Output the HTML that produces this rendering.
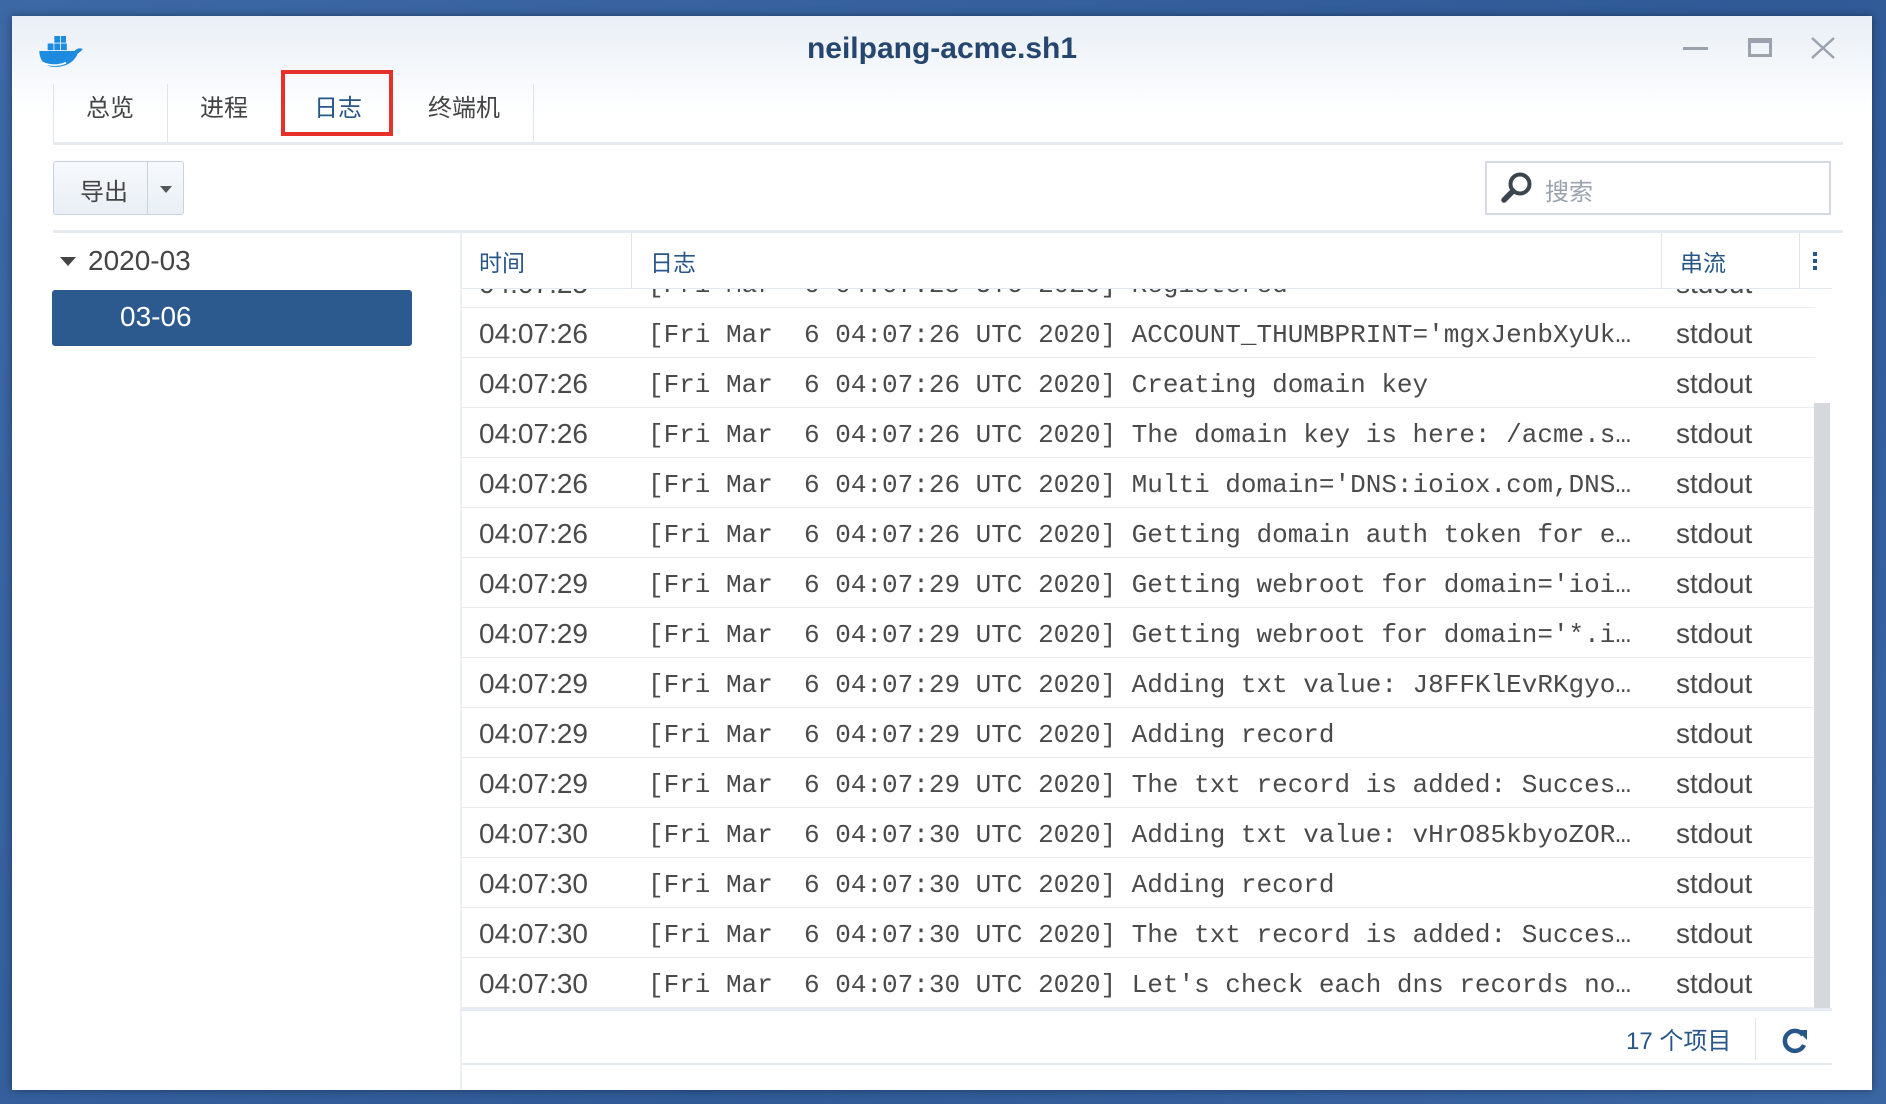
<!DOCTYPE html>
<html><head><meta charset="utf-8"><style>
*{margin:0;padding:0;box-sizing:border-box}
body{width:1886px;height:1104px;overflow:hidden;background:linear-gradient(135deg,#3d68a6,#2f5a96 60%,#3a66a3);font-family:"Liberation Sans","Noto Sans CJK SC",sans-serif;position:relative}
.win{position:absolute;left:12px;top:16px;width:1860px;height:1074px;background:#fff;box-shadow:0 0 8px rgba(0,0,0,.4)}
.tb{position:absolute;left:0;top:0;width:100%;height:100px;background:linear-gradient(#e9eff6,#fff)}
.title{position:absolute;left:0;width:100%;top:16px;text-align:center;font-size:30px;font-weight:bold;color:#24466f}
.abs{position:absolute}
.tab{position:absolute;top:72px;font-size:24px;color:#444}
.sep{position:absolute;width:1px;background:#e0e4ea}
.mono{font-family:"Liberation Mono",monospace;font-size:26px}
.row{position:absolute;left:0;width:1353px;height:50px;border-bottom:1px solid #e9edf1;color:#4a4a4a}
.row span{position:absolute;top:12px}
.t{left:17px;font-size:28px;top:10px!important}
.l{left:186px;white-space:pre}
.s{left:1214px;font-size:28px;top:10px!important}
</style></head><body>
<div class="win">
 <div class="tb"></div>
 <svg class="abs" style="left:24px;top:16px" width="50" height="38" viewBox="0 0 60 44">
  <path d="M4 22 H46 C50 18 54 18 56 20 C54 22 52 24 50 25 C46 36 34 42 20 41 C10 40 4 32 4 22Z" fill="#1d8ce0"/>
  <rect x="14" y="13" width="7" height="8" fill="#1d8ce0"/><rect x="22" y="13" width="7" height="8" fill="#1d8ce0"/><rect x="30" y="13" width="7" height="8" fill="#1d8ce0"/><rect x="22" y="4" width="7" height="8" fill="#1d8ce0"/><rect x="30" y="4" width="6" height="8" fill="#1d8ce0"/>
  <path d="M8 36 C16 40 28 40 36 36" stroke="#fff" stroke-width="2" fill="none"/>
 </svg>
 <div class="title">neilpang-acme.sh1</div>
 <div class="abs" style="left:1671px;top:31px;width:25px;height:3px;background:#9aa3ad"></div>
 <div class="abs" style="left:1736px;top:22px;width:24px;height:19px;border:3px solid #9aa3ad;border-top-width:5px"></div>
 <svg class="abs" style="left:1798px;top:21px" width="26" height="22"><path d="M2 1 L24 21 M24 1 L2 21" stroke="#9aa3ad" stroke-width="2.5"/></svg>

 <div class="sep" style="left:41px;top:68px;height:58px"></div>
 <div class="sep" style="left:155px;top:68px;height:58px"></div>
 <div class="sep" style="left:521px;top:68px;height:58px"></div>
 <div class="tab" style="left:74px">总览</div>
 <div class="tab" style="left:188px">进程</div>
 <div class="tab" style="left:302px;color:#275689">日志</div>
 <div class="tab" style="left:416px">终端机</div>
 <div class="abs" style="left:269px;top:54px;width:112px;height:66px;border:4px solid #e8302a"></div>
 <div class="abs" style="left:41px;top:126px;width:1790px;height:3px;background:#e6eaef"></div>

 <div class="abs" style="left:41px;top:145px;width:131px;height:54px;border:1px solid #c9d3df;border-radius:3px;background:linear-gradient(#f6f9fc,#e9eff6)"></div>
 <div class="abs" style="left:135px;top:146px;width:1px;height:52px;background:#c9d3df"></div>
 <div class="abs" style="left:68px;top:156px;font-size:24px;color:#444">导出</div>
 <div class="abs" style="left:148px;top:170px;border-left:6px solid transparent;border-right:6px solid transparent;border-top:7px solid #555"></div>

 <div class="abs" style="left:1473px;top:145px;width:346px;height:54px;border:2px solid #d3dae2;background:#fff"></div>
 <svg class="abs" style="left:1488px;top:155px" width="34" height="34" viewBox="0 0 34 34"><circle cx="20" cy="13" r="9.5" stroke="#3b4550" stroke-width="4" fill="none"/><path d="M13 20 L4 29" stroke="#3b4550" stroke-width="5.5" stroke-linecap="round"/></svg>
 <div class="abs" style="left:1533px;top:156px;font-size:24px;color:#9aa3ad">搜索</div>

 <div class="abs" style="left:41px;top:214px;width:1790px;height:3px;background:#e6ebf1"></div>
 <div class="abs" style="left:48px;top:241px;border-left:8px solid transparent;border-right:8px solid transparent;border-top:9px solid #444"></div>
 <div class="abs" style="left:76px;top:229px;font-size:28px;color:#444">2020-03</div>
 <div class="abs" style="left:40px;top:274px;width:360px;height:56px;background:#2c5a8e;border-radius:3px"></div>
 <div class="abs" style="left:108px;top:285px;font-size:28px;color:#fff">03-06</div>

 <div class="abs" style="left:448px;top:217px;width:2px;height:857px;background:#eceff3"></div>
 <div class="abs" style="left:450px;top:217px;width:1370px;height:56px;background:#fff;border-bottom:1px solid #e3e8ee"></div>
 <div class="sep" style="left:619px;top:217px;height:56px"></div>
 <div class="sep" style="left:1649px;top:217px;height:56px"></div>
 <div class="sep" style="left:1787px;top:217px;height:56px"></div>
 <div class="abs" style="left:467px;top:228px;font-size:23px;color:#275689">时间</div>
 <div class="abs" style="left:638px;top:228px;font-size:23px;color:#275689">日志</div>
 <div class="abs" style="left:1668px;top:228px;font-size:23px;color:#275689">串流</div>
 <div class="abs" style="left:1801px;top:236px;width:4px;height:4px;background:#275689;box-shadow:0 7px 0 #275689,0 14px 0 #275689"></div>

 <div class="abs" style="left:450px;top:273px;width:1370px;height:719px;overflow:hidden">
  <div class="abs" style="left:0;top:-31px;width:1370px">
   <div class="row" style="top:0"><span class="t">04:07:25</span><span class="l mono">[Fri Mar  6 04:07:25 UTC 2020] Registered</span><span class="s">stdout</span></div>
   <div class="row" style="top:50px"><span class="t">04:07:26</span><span class="l mono">[Fri Mar  6 04:07:26 UTC 2020] ACCOUNT_THUMBPRINT='mgxJenbXyUk…</span><span class="s">stdout</span></div>
   <div class="row" style="top:100px"><span class="t">04:07:26</span><span class="l mono">[Fri Mar  6 04:07:26 UTC 2020] Creating domain key</span><span class="s">stdout</span></div>
   <div class="row" style="top:150px"><span class="t">04:07:26</span><span class="l mono">[Fri Mar  6 04:07:26 UTC 2020] The domain key is here: /acme.s…</span><span class="s">stdout</span></div>
   <div class="row" style="top:200px"><span class="t">04:07:26</span><span class="l mono">[Fri Mar  6 04:07:26 UTC 2020] Multi domain='DNS:ioiox.com,DNS…</span><span class="s">stdout</span></div>
   <div class="row" style="top:250px"><span class="t">04:07:26</span><span class="l mono">[Fri Mar  6 04:07:26 UTC 2020] Getting domain auth token for e…</span><span class="s">stdout</span></div>
   <div class="row" style="top:300px"><span class="t">04:07:29</span><span class="l mono">[Fri Mar  6 04:07:29 UTC 2020] Getting webroot for domain='ioi…</span><span class="s">stdout</span></div>
   <div class="row" style="top:350px"><span class="t">04:07:29</span><span class="l mono">[Fri Mar  6 04:07:29 UTC 2020] Getting webroot for domain='*.i…</span><span class="s">stdout</span></div>
   <div class="row" style="top:400px"><span class="t">04:07:29</span><span class="l mono">[Fri Mar  6 04:07:29 UTC 2020] Adding txt value: J8FFKlEvRKgyo…</span><span class="s">stdout</span></div>
   <div class="row" style="top:450px"><span class="t">04:07:29</span><span class="l mono">[Fri Mar  6 04:07:29 UTC 2020] Adding record</span><span class="s">stdout</span></div>
   <div class="row" style="top:500px"><span class="t">04:07:29</span><span class="l mono">[Fri Mar  6 04:07:29 UTC 2020] The txt record is added: Succes…</span><span class="s">stdout</span></div>
   <div class="row" style="top:550px"><span class="t">04:07:30</span><span class="l mono">[Fri Mar  6 04:07:30 UTC 2020] Adding txt value: vHrO85kbyoZOR…</span><span class="s">stdout</span></div>
   <div class="row" style="top:600px"><span class="t">04:07:30</span><span class="l mono">[Fri Mar  6 04:07:30 UTC 2020] Adding record</span><span class="s">stdout</span></div>
   <div class="row" style="top:650px"><span class="t">04:07:30</span><span class="l mono">[Fri Mar  6 04:07:30 UTC 2020] The txt record is added: Succes…</span><span class="s">stdout</span></div>
   <div class="row" style="top:700px"><span class="t">04:07:30</span><span class="l mono">[Fri Mar  6 04:07:30 UTC 2020] Let's check each dns records no…</span><span class="s">stdout</span></div>
  </div>
  <div class="abs" style="left:1352px;top:114px;width:16px;height:605px;background:#d5d9dd"></div>
 </div>
 <div class="abs" style="left:450px;top:992px;width:1370px;height:3px;background:#e6ebf1"></div>
 <div class="abs" style="left:1614px;top:1005px;font-size:24px;color:#275689">17 个项目</div>
 <div class="sep" style="left:1743px;top:1002px;height:42px"></div>
 <svg class="abs" style="left:1768px;top:1010px" width="30" height="30" viewBox="0 0 30 30"><path d="M23 9 A10 10 0 1 0 24 19" stroke="#275689" stroke-width="4.5" fill="none"/><path d="M17 4 L27 4 L27 14 Z" fill="#275689"/></svg>
 <div class="abs" style="left:450px;top:1047px;width:1370px;height:2px;background:#e6ebf1"></div>
</div>
</body></html>
